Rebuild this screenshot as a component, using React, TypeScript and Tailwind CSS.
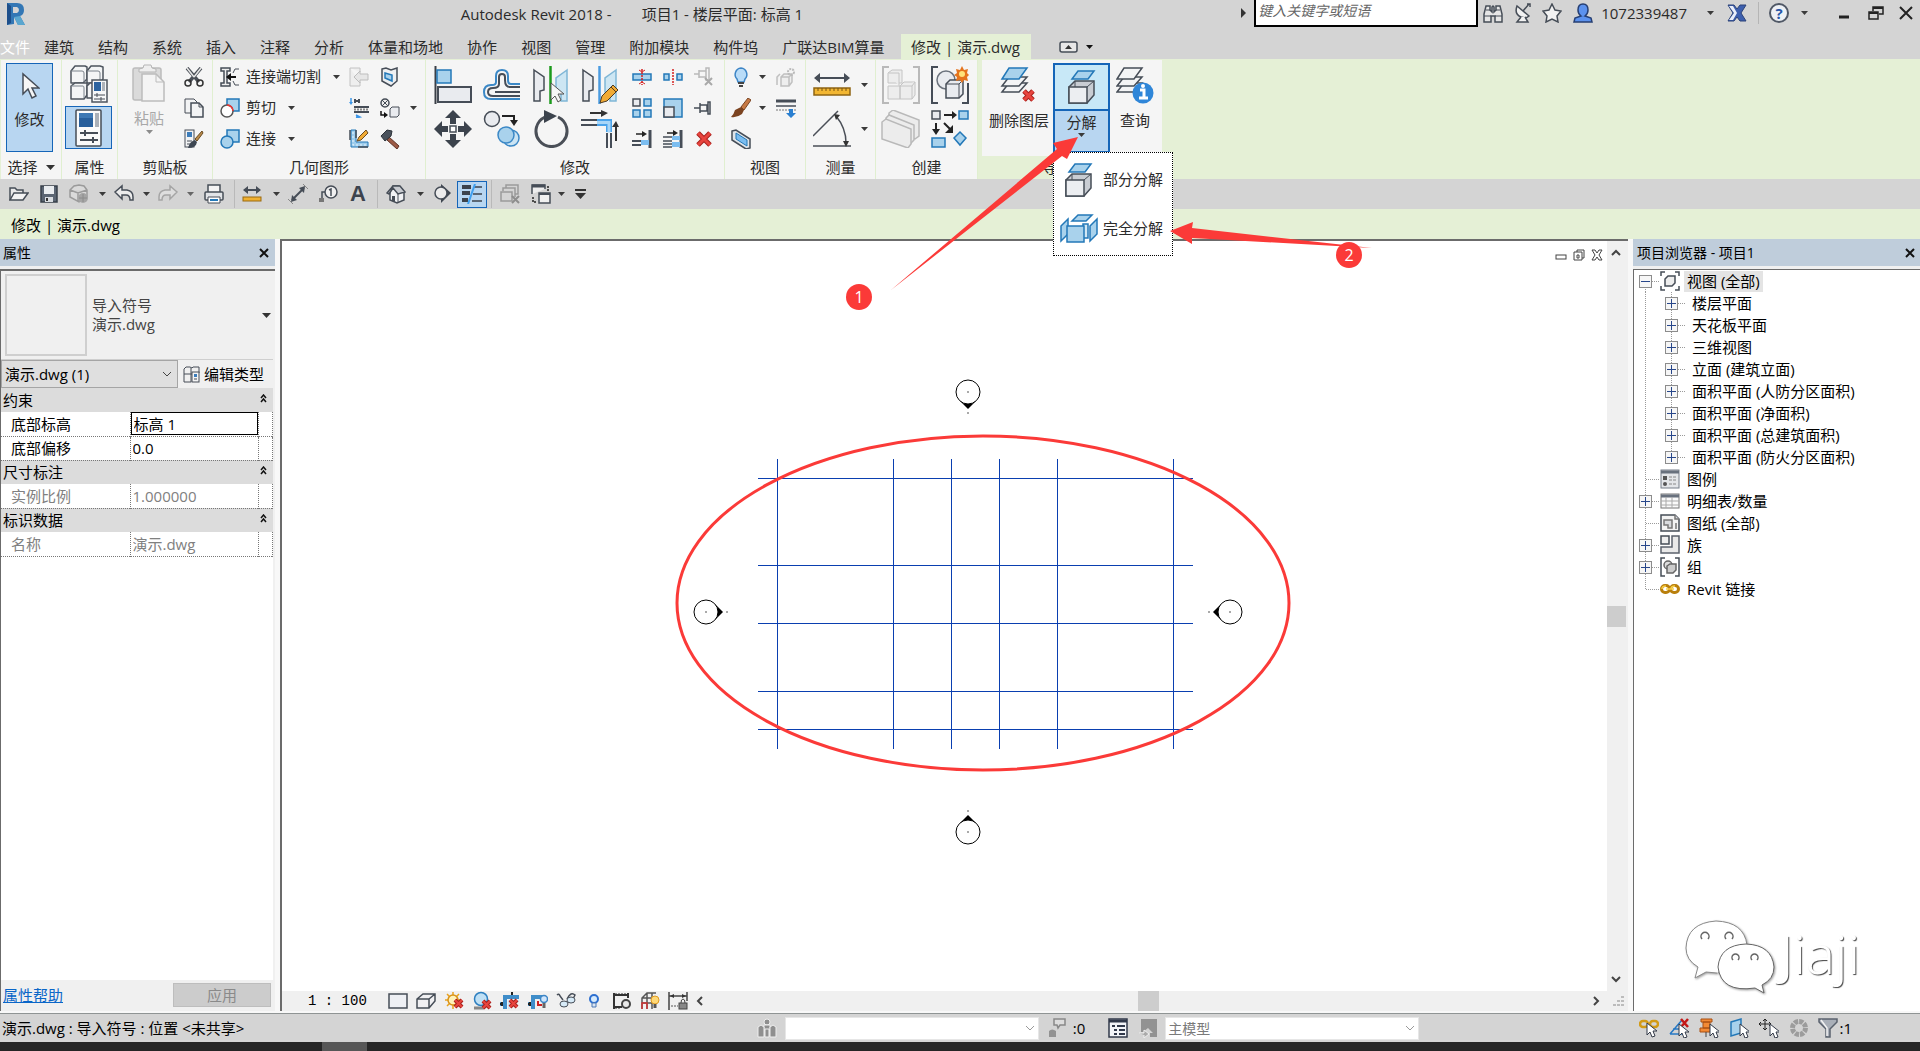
import React from "react";

type SvgProps = { w?: number; h?: number; vb?: string; children: React.ReactNode };

const Svg: React.FC<SvgProps> = ({ w = 20, h = w, vb, children }) => (
    <svg width={w} height={h} viewBox={vb ?? `0 0 ${w} ${h}`} fill="none" className="shrink-0" aria-hidden="true">
        {children}
    </svg>
);

const DARK = "#464d57";
const BLUE = "#2378b8";
const SKY = "#a9d2ec";
const PALE = "#e9ebef";
const GREY = "#b9b9b9";

const Caret = ({ color = "#3a3a3a" }: { color?: string }) => (
    <Svg w={7} h={4}><path d="M0 0h7L3.5 4z" fill={color} /></Svg>
);

const RedX = ({ x, y, s }: { x: number; y: number; s: number }) => (
    <>
        <path d={`M${x} ${y}l${s} ${s}M${x + s} ${y}l${-s} ${s}`} stroke="#a8211d" strokeWidth={s > 8 ? 5 : 4} />
        <path d={`M${x} ${y}l${s} ${s}M${x + s} ${y}l${-s} ${s}`} stroke="#e8443e" strokeWidth={s > 8 ? 3 : 2} />
    </>
);

const Cursor = ({ x, y }: { x: number; y: number }) => (
    <path d={`M${x} ${y}v12l3-3 2 5 3-1-2-5h4z`} fill="#fff" stroke="#333a48" />
);

/* ---------- ribbon icons, 38px ---------- */
const big: Record<string, React.ReactNode> = {
    arrow: <Svg w={20} h={28}><path d="M3 2v20l5-5 4 9 4-2-4-8h7z" fill="#f6f6f6" stroke={DARK} strokeWidth="1.5" /></Svg>,
    types: (
        <Svg w={38}>
            <g fill="#f4f5f6" stroke="#4d545e" strokeWidth="1.5" strokeLinejoin="round">
                <path d="M1 6l4-5h10l2 1v12l-4 4H1z" /><path d="M17 6l4-5h9l3 1v12l-3 4H17z" />
                <path d="M1 21l4-3h12v12l-3 4H1z" /><path d="M17 21l3-3h8v15h-11z" />
            </g>
            <path d="M1 6h11q2 0 2 2v9M17 6h11q2 0 2 2v9M1 21h12q1 0 1 2v10" stroke="#7b828b" />
            <rect x="22" y="15" width="15" height="22" fill="#f7f8f9" stroke="#4d545e" strokeWidth="1.5" />
            <rect x="24" y="17" width="7" height="9" fill="#2c63a0" /><rect x="32" y="17" width="3" height="9" fill="#aeb3ba" />
            <path d="M24 30h11M24 34h11M27 28v4M31 32v4" stroke={DARK} />
        </Svg>
    ),
    props: (
        <Svg w={28} h={38}>
            <rect x="1" y="1" width="25" height="36" rx="1" fill="#fafafa" stroke={DARK} strokeWidth="1.5" />
            <rect x="4" y="4" width="14" height="14" fill="#285f9c" /><rect x="4" y="4" width="14" height="5" fill="#3d78b4" /><rect x="20" y="4" width="4" height="14" fill="#aab0b8" />
            <path d="M5 24h18M5 31h18M10 21v6M18 28v6" stroke={DARK} strokeWidth="2" />
        </Svg>
    ),
    paste: (
        <Svg w={34} h={38}>
            <rect x="1" y="4" width="28" height="32" rx="2" fill="#dadada" stroke="#bcbcbc" strokeWidth="1.5" />
            <path d="M7 8V5l4-1 1-3h7l1 3 4 1v3z" fill="#eee" stroke="#b5b5b5" />
            <path d="M10 10h14l8 8v19H10z" fill="#f4f4f4" stroke="#bcbcbc" strokeWidth="1.5" /><path d="M24 10v8h8" stroke="#bcbcbc" />
        </Svg>
    ),
    align: (
        <Svg w={38}><path d="M1.500 0v38" stroke="#3a3f47" strokeWidth="2" /><rect x="3" y="4" width="14" height="13" fill={SKY} stroke={BLUE} strokeWidth="1.500" /><rect x="4" y="21" width="33" height="15" fill={PALE} stroke={DARK} strokeWidth="2" /></Svg>
    ),
    offset: (
        <Svg w={38}>
            <path d="M37 18h-9q-3 0-3-4V10q0-6-6-6t-6 6v6q0 3-4 3H8Q1 19 1 26t7 7h29" stroke="#3b88c6" strokeWidth="2" />
            <path d="M37 21h-10q-5 0-5-7v-3q0-3-3-3t-3 3v7q0 4-6 4-5 0-5 4t5 4h27M37 26H12" stroke={DARK} strokeWidth="2" />
        </Svg>
    ),
    mirrorPick: (
        <Svg w={38}>
            <path d="M2 4l10 7v13l-4 1v10H2z" fill={PALE} stroke={DARK} strokeWidth="1.500" /><path d="M35 4L24 12v14l5 2v7h6z" fill="#cde6f3" stroke="#7fb6d6" strokeWidth="1.500" />
            <path d="M18.500 0v38" stroke="#1c9a1c" strokeWidth="2.500" /><path d="M19 17v17l4-4 3 6 3-2-3-6h6z" fill="#f6f6f6" stroke="#555" />
        </Svg>
    ),
    mirrorDraw: (
        <Svg w={38}>
            <path d="M2 4l10 7v13l-4 1v10H2z" fill={PALE} stroke={DARK} strokeWidth="1.500" /><path d="M35 4L24 12v14l5 2v7h6z" fill="#cde6f3" stroke="#7fb6d6" strokeWidth="1.500" />
            <path d="M18.500 0v38" stroke="#4a9be0" strokeWidth="2.500" /><path d="M19 37l2-7 11-11 5 5-11 11z" fill="#f1ab35" stroke="#4e3b22" /><path d="M30 21l5 5" stroke="#4e3b22" />
        </Svg>
    ),
    move: (
        <Svg w={38}><path d="M19 0l8 8h-5v6h-6V8h-5zM19 38l-8-8h5v-6h6v6h5zM0 19l8-8v5h6v6H8v5zM38 19l-8 8v-5h-6v-6h6v-5z" fill="#3c434d" /><rect x="16" y="16" width="6" height="6" fill="#fff" stroke={DARK} strokeWidth="1.500" /></Svg>
    ),
    copyEl: (
        <Svg w={38}>
            <circle cx="9" cy="9" r="7.500" fill={PALE} stroke={DARK} strokeWidth="1.500" /><circle cx="28" cy="28" r="8" fill="#cbe4f3" stroke="#3b88c6" strokeWidth="1.500" /><circle cx="23" cy="25" r="8" fill={SKY} stroke="#3b88c6" strokeWidth="1.500" />
            <path d="M19 6h12v5" stroke="#222" strokeWidth="2" /><path d="M27 10h8l-4 6z" fill="#222" />
        </Svg>
    ),
    rotate: <Svg w={38}><path d="M26 7a15.500 15.500 0 1 1-13 0" stroke="#4a4f57" strokeWidth="3" /><path d="M12 0l13 6-13 7z" fill="#3c434d" /></Svg>,
    trim: (
        <Svg w={38}><path d="M0 10h16M0 15h16M26 23v15M30 23v15" stroke={DARK} strokeWidth="2" /><path d="M16 10h14v12M16 15h10v7" stroke="#4aa3ea" strokeWidth="2" /><path d="M16 12.500h12v10" stroke="#a8d6f8" strokeWidth="3" /><path d="M9 3h14M35 31V14" stroke="#333" strokeWidth="2" /><path d="M20 0l7 3-7 4zM31 17l4-6 3 6z" fill="#333" /></Svg>
    ),
    dimension: (
        <Svg w={38}><path d="M3 12h32" stroke={DARK} strokeWidth="2" /><path d="M1 12l6-5v10zM37 12l-6-5v10z" fill={DARK} /><rect x="1" y="22" width="36" height="7" fill="#f2b632" stroke="#8f6413" strokeWidth="1.500" /><path d="M5 22v3M9 22v3M13 22v3M17 22v3M21 22v3M25 22v3M29 22v3M33 22v3" stroke="#7b5410" /></Svg>
    ),
    angle: <Svg w={38}><path d="M0 26L25 1M0 36h38M23 6q10 12 10 27" stroke="#4a4f57" strokeWidth="1.500" /><path d="M21 4l6 1-4 5zM30 31h6l-3 6z" fill="#333" /></Svg>,
    group: (
        <Svg w={38}><path d="M7 1H1v36h6M31 1h6v36h-6" stroke={GREY} strokeWidth="2" /><g fill="#ededed" stroke="#c4c4c4"><path d="M6 7l4-3h10v13H6zM6 20h12v13H6zM18 20l4-4h11v13l-3 4H18z" /><path d="M6 7h11v13M30 20v13M18 20h12l3-4" /></g></Svg>
    ),
    createGroup: (
        <Svg w={38}><path d="M7 1H1v36h6M31 37h6V17" stroke={DARK} strokeWidth="2" /><circle cx="15" cy="14" r="9" fill={PALE} stroke="#6c737d" strokeWidth="1.500" /><path d="M15 18l4-4h13v14l-4 4H15z" fill={PALE} stroke={DARK} strokeWidth="1.500" /><path d="M15 18h13v14M28 18l4-4" stroke={DARK} /><path d="M31 0l2 4 4-1-1 4 2 2-2 2 1 4-4-1-2 3-2-3-4 1 1-4-3-2 3-2-1-4 4 1z" fill="#e5741d" /><circle cx="31" cy="8" r="3" fill="#ffe27a" /></Svg>
    ),
    assembly: (
        <Svg w={40} h={38}><g fill="#ececec" stroke={GREY} strokeWidth="1.500"><path d="M8 3l4-3 26 10v16l-4 3L8 19z" /><path d="M5 8l3-3 25 10v15l-3 3L5 22z" /><path d="M1 12l4-3 25 10v15l-3 4L1 29z" /></g></Svg>
    ),
    similar: (
        <Svg w={38}><rect x="1" y="1" width="8" height="8" fill={PALE} stroke={DARK} strokeWidth="1.500" /><g fill={SKY} stroke={BLUE} strokeWidth="1.500"><rect x="28" y="1" width="9" height="8" /><rect x="1" y="28" width="13" height="9" /><path d="M29 22l6 6-6 7-6-7z" /></g><path d="M13 5h9M5 13v8M13 13l7 7" stroke="#222" strokeWidth="2" /><path d="M21 1l5 4-5 4zM1 19h8l-4 6zM22 15v8h-8z" fill="#222" /></Svg>
    ),
    deleteLayer: (
        <Svg w={38}><g fill="#f3f4f5" stroke={DARK} strokeWidth="1.500"><path d="M2 26l7-9h18l-8 9z" /><path d="M2 20l7-9h18l-8 9z" /></g><path d="M2 13L9 2h18l-8 11z" fill={SKY} stroke={BLUE} strokeWidth="1.500" /><RedX x={24} y={25} s={9} /></Svg>
    ),
    query: (
        <Svg w={38}><g fill="#f3f4f5" stroke={DARK} strokeWidth="1.500"><path d="M1 26l7-9h18l-8 9z" /><path d="M1 20l7-9h18l-8 9z" /><path d="M1 13L8 2h18l-8 11z" /></g><circle cx="27" cy="27" r="10.500" fill="#2f86d8" /><path d="M24 24h4v8M23 32h9" stroke="#fff" strokeWidth="3" /><circle cx="27" cy="20" r="2" fill="#fff" /></Svg>
    ),
    explode: (
        <Svg w={28} h={34}><path d="M1 17l6-6h19v14l-7 8H1z" fill="#c9cdd3" stroke={DARK} strokeWidth="1.500" /><path d="M7 11v6M19 17l7-6" stroke={DARK} /><path d="M1 17h18v16H1z" fill="#eceef1" stroke={DARK} strokeWidth="1.500" /><path d="M4 9l6-8h16l-6 8z" fill={SKY} stroke={BLUE} strokeWidth="1.500" /></Svg>
    ),
    explodeFull: (
        <Svg w={38} h={30}><g fill={SKY} stroke={BLUE} strokeWidth="1.500"><path d="M1 12l7-7v15l-7 7zM30 12l7-7v15l-7 7z" /><path d="M12 7l6-6h14l-6 6z" /><path d="M23 10h5v14h-5z" fill="#d3e8f5" /><path d="M7 12h17v16H7z" /></g></Svg>
    ),
};

/* ---------- small icons, 20px ---------- */
const sm: Record<string, React.ReactNode> = {
    cut: <Svg><path d="M3 1l12 14M17 1L5 15" stroke="#4a4f57" strokeWidth="3.500" /><path d="M3 1l7 9M17 1l-7 9" stroke="#e6e6e6" strokeWidth="1.500" /><circle cx="4" cy="16" r="3" stroke="#333" strokeWidth="1.500" /><circle cx="16" cy="16" r="3" stroke="#333" strokeWidth="1.500" /></Svg>,
    copy: <Svg><path d="M1 1h9l3 3v11H1z" fill="#f2f3f4" stroke={DARK} /><path d="M7 5h8l4 4v10H7z" fill="#f2f3f4" stroke={DARK} strokeWidth="1.500" /><path d="M15 5v4h4" stroke={DARK} /></Svg>,
    match: <Svg><rect x="1" y="1" width="9" height="17" fill="#f2f3f4" stroke={DARK} /><rect x="3" y="3" width="5" height="5" fill="#3c7cba" /><path d="M3 12h5M3 15h5" stroke={DARK} /><path d="M11 10l7-8 1 2-6 8z" fill="#b98b4a" stroke="#6a4a20" /><path d="M4 19q2-7 7-8l2 2q-1 6-9 6z" fill="#3d4652" /></Svg>,
    cope: <Svg><path d="M1 1h9v3H7v12h3v3H1v-3h3V4H1z" fill="#eee" stroke={DARK} strokeWidth="1.500" /><path d="M19 2h-4l-2 4M19 18h-4l-2-4" stroke={DARK} /><path d="M8 10h8" stroke="#111" strokeWidth="2" /><path d="M11 6v8l-5-4z" fill="#111" /></Svg>,
    cutGeo: <Svg><rect x="7" y="1" width="12" height="12" fill={SKY} stroke={BLUE} strokeWidth="1.500" /><circle cx="7" cy="13" r="6" fill="#fff" stroke="#555" strokeWidth="1.500" /><path d="M7 7a6 6 0 0 1 6 6" stroke="#e33" strokeWidth="1.500" /></Svg>,
    join: <Svg><rect x="7" y="1" width="12" height="12" fill={SKY} stroke={BLUE} strokeWidth="1.500" /><circle cx="7" cy="13" r="6" fill={SKY} stroke={BLUE} strokeWidth="1.500" /></Svg>,
    joinOff: <Svg><path d="M1 1h10v4M1 1v18h10v-4" fill="#eee" stroke="#c2c2c2" /><path d="M19 7h-8V4l-6 6 6 6v-3h8z" fill="#e6e6e6" stroke="#bdbdbd" /></Svg>,
    wallOpen: <Svg><path d="M2 2l4-1 5 2 6-2v13l-6 5-9-5z" fill="#eef0f2" stroke={DARK} strokeWidth="1.500" /><path d="M5 6l7 2v6l-7-3z" fill={SKY} stroke={BLUE} strokeWidth="1.500" /></Svg>,
    beam: <Svg><path d="M2 0v5M7 19h3M7 17l4 2-4 1" stroke="#3c96e8" strokeWidth="1.500" /><path d="M0 4h4L2 7z" fill="#3c96e8" /><path d="M6 1v4M10 1v4M6 3h4M5 9h15M5 14h15" stroke={DARK} strokeWidth="2" /><path d="M5 11.500h15" stroke="#888" strokeDasharray="2 1" strokeWidth="2" /></Svg>,
    splitFace: <Svg><circle cx="5" cy="5" r="4" fill="#eee" stroke={DARK} strokeWidth="1.500" /><path d="M2 2l6 6M8 2L2 8" stroke={DARK} /><path d="M10 11l2-2h7v8l-2 2h-7z" fill={PALE} stroke={DARK} /><path d="M1 13v4h5" stroke="#111" strokeWidth="1.500" /><path d="M4 14l4 3-4 3z" fill="#111" /></Svg>,
    wallJoin: <Svg><path d="M2 1v17h17v-5H7V1z" fill="#9fcdec" stroke={BLUE} /><path d="M1 1v10M7 1v8M9 18h10" stroke={DARK} strokeWidth="1.500" /><path d="M4 3v13h15" stroke="#e8f4fc" strokeDasharray="2 2" /><path d="M8 12l2-4 7-7 2 3-7 7z" fill="#f1ab35" stroke="#6a4a20" /></Svg>,
    hammer: <Svg><path d="M9 8l10 9-2 3-10-9z" fill="#9d5a45" stroke="#5e3226" /><path d="M1 7l6-6 5 1-1 5-6 5z" fill="#4a525c" stroke="#2e343b" /></Svg>,
    splitEl: <Svg><rect x="1" y="7" width="18" height="6" fill={SKY} stroke={BLUE} strokeWidth="1.500" /><path d="M10 2v16" stroke="#d42020" strokeWidth="1.500" strokeDasharray="2 1" /><path d="M7 3l3 2 3-2M7 17l3-2 3 2" stroke="#d42020" /></Svg>,
    splitGap: <Svg><rect x="1" y="7" width="5" height="6" fill={SKY} stroke={BLUE} strokeWidth="1.500" /><rect x="14" y="7" width="5" height="6" fill={SKY} stroke={BLUE} strokeWidth="1.500" /><path d="M10 2v16" stroke="#d42020" strokeWidth="1.500" strokeDasharray="2 1" /></Svg>,
    unpin: <Svg><path d="M0 7h5M5 3v8M5 4h7M5 10h7M12 1v12h3V1z" stroke={GREY} strokeWidth="1.500" /><path d="M11 11l7 7M18 11l-7 7" stroke="#a9a9a9" strokeWidth="2" /></Svg>,
    array: <Svg><g strokeWidth="1.500"><rect x="1" y="1" width="7" height="7" fill={PALE} stroke={DARK} /><g fill={SKY} stroke={BLUE}><rect x="12" y="1" width="7" height="7" /><rect x="1" y="12" width="7" height="7" /><rect x="12" y="12" width="7" height="7" /></g></g></Svg>,
    scale: <Svg><rect x="1" y="1" width="18" height="18" fill={SKY} stroke={BLUE} strokeWidth="1.500" /><rect x="1" y="9" width="10" height="10" fill={PALE} stroke={DARK} strokeWidth="1.500" /></Svg>,
    pin: <Svg><path d="M0 10h6M6 5v10M6 7h7v6H6M14 4v12h2V4z" stroke={DARK} strokeWidth="1.500" /></Svg>,
    trimOne: <Svg><path d="M18 1v18" stroke={DARK} strokeWidth="3" /><path d="M0 12h9M0 16h9" stroke={DARK} strokeWidth="2" /><path d="M9 11h8v5H9z" fill="#7bbdf0" /><path d="M4 5h7" stroke="#222" strokeWidth="1.500" /><path d="M10 2l5 3-5 3z" fill="#222" /></Svg>,
    trimMany: <Svg><path d="M18 1v18" stroke={DARK} strokeWidth="3" /><path d="M0 8h9M0 12h9M0 15h9M0 18h9" stroke={DARK} strokeWidth="1.500" /><path d="M9 7h8v4H9zM9 13h8v5H9z" fill="#7bbdf0" /><path d="M4 4h7" stroke="#222" strokeWidth="1.500" /><path d="M10 1l5 3-5 3z" fill="#222" /></Svg>,
    del: <Svg><RedX x={4} y={4} s={12} /></Svg>,
    bulb: <Svg><path d="M10 1a6.500 6.500 0 0 1 4 11l-1 3H7l-1-3a6.500 6.500 0 0 1 4-11z" fill="#b9dcf8" stroke="#3d85c6" strokeWidth="1.500" /><path d="M7 16h6M8 19h4" stroke="#444" strokeWidth="2" /></Svg>,
    displace: <Svg><path d="M5 10l3-3h8v8l-3 4H5zM5 10h8v9M13 10l3-3M1 18V10l3-3" fill="#eee" stroke="#c0c0c0" strokeWidth="1.500" /><circle cx="15" cy="5" r="3" stroke="#bbb" strokeWidth="2" strokeDasharray="2 1" /></Svg>,
    brush: <Svg><path d="M10 9l7-9 3 2-7 10z" fill="#c77a45" stroke="#7a4524" /><path d="M0 19q3-3 4-7l6-3 3 3-2 4q-5 4-11 3z" fill="#7b4320" /></Svg>,
    lineweight: <Svg><path d="M0 3h20" stroke={DARK} strokeWidth="3" /><path d="M0 8h20" stroke={DARK} strokeWidth="1.500" /><path d="M0 12h20" stroke="#777" strokeDasharray="2 1" /><path d="M13 11h4v4h3l-5 5-5-5h3z" fill="#2a7fd0" /></Svg>,
    selBox: <Svg><path d="M1 2l4-1 14 9v9l-4 1-14-9z" fill="#dfe4e9" stroke={DARK} strokeWidth="1.500" /><path d="M5 4l11 7v6L5 10z" fill="#7bbdf0" stroke={BLUE} /></Svg>,
};

/* ---------- quick access icons ---------- */
const qat: Record<string, React.ReactNode> = {
    open: <Svg w={20} h={18}><path d="M1 15V3h5l2 2h6v3" fill="#e9e9e9" stroke={DARK} strokeWidth="1.500" /><path d="M1 15L5 8h14l-5 7z" fill="#f4f4f4" stroke={DARK} strokeWidth="1.500" /></Svg>,
    save: <Svg w={18}><path d="M1 1h16v16H1z" fill="#5b6573" stroke="#373f4a" strokeWidth="1.500" /><path d="M4 1h10v8H4z" fill="#e9ecef" /><path d="M5 12h8v5H5z" fill="#d9dde2" /><rect x="6" y="13" width="2" height="3" fill="#333" /></Svg>,
    sync: <Svg><path d="M1 6l4-4 5-1 5 1 3 4v7l-8 5-9-5zM1 6l8 3 9-3M9 9v9" fill="#dadada" stroke="#9b9b9b" strokeWidth="1.500" /><circle cx="14" cy="14" r="5" fill="#a5a5a5" /><path d="M10 14h8M14 10v8" stroke="#8c8c8c" /></Svg>,
    undo: <Svg><path d="M1 8l7-6v4h5q6 1 6 7v3h-3q0-5-4-5H8v4z" fill="#ececec" stroke={DARK} strokeWidth="1.500" /></Svg>,
    redo: <Svg><path d="M19 8l-7-6v4H7q-6 1-6 7v3h3q0-5 4-5h4v4z" fill="#dedede" stroke="#a5a5a5" strokeWidth="1.500" /></Svg>,
    print: <Svg><path d="M4 8V1h12v7" fill="#f4f4f4" stroke={DARK} strokeWidth="1.500" /><rect x="1" y="8" width="18" height="8" rx="1" fill="#e2e4e7" stroke={DARK} strokeWidth="1.500" /><path d="M4 13h12v6H4z" fill="#fff" stroke={DARK} /><path d="M6 16h8" stroke={BLUE} strokeWidth="2" /></Svg>,
    measure: <Svg><path d="M2 6h16" stroke={DARK} strokeWidth="2" /><path d="M1 6l5-4v8zM19 6l-5-4v8z" fill={DARK} /><rect x="1" y="13" width="18" height="4" fill="#f0b030" stroke="#9a6a10" /></Svg>,
    dim: <Svg><path d="M4 16L16 4" stroke={DARK} strokeWidth="2" /><path d="M4 11l5 5-6 2zM16 9l-5-5 6-2z" fill={DARK} /><path d="M0 15l5 5M15 0l5 5" stroke="#888" /></Svg>,
    tag: <Svg><circle cx="13" cy="8" r="6" fill="#f0f0f0" stroke={DARK} strokeWidth="1.500" /><path d="M11 6l2-1v7M7 8H4v7" stroke={DARK} strokeWidth="1.500" /><rect x="1" y="14" width="5" height="4" fill="#777" /></Svg>,
    house: <Svg><path d="M4 8v8l7 3 7-3V8l-5-6H7z" fill="#f1f2f4" stroke={DARK} strokeWidth="1.500" /><path d="M1 9l6-7h7l5 6-7 2-5-6-4 6z" fill="#c9ccd1" stroke={DARK} strokeWidth="1.500" /><path d="M12 10v9" stroke={DARK} /><path d="M6 12h3v6l-3-1z" fill={DARK} /></Svg>,
    section: <Svg><path d="M9 0l10 9-10 10z" fill="#3f4650" /><circle cx="9" cy="9" r="6" fill="#ececec" stroke={DARK} strokeWidth="1.500" /></Svg>,
    thin: <Svg w={22} h={20}><path d="M1 3h9M1 9h8M1 16h6" stroke="#3c434d" strokeWidth="4" /><path d="M13 3h8M12 10h9M11 17h10" stroke="#3c434d" strokeWidth="1.500" /><path d="M14 0L7 20" stroke="#3fa0f0" strokeWidth="2" /></Svg>,
    closeHidden: <Svg><path d="M6 4V1h12v9h-3M3 7V4h12v9M1 8h11v9H1z" stroke="#9a9a9a" strokeWidth="1.500" /><path d="M12 12l7 7M19 12l-7 7" stroke="#8e8e8e" strokeWidth="2" /></Svg>,
    switchWin: <Svg><path d="M1 10V1h13v4" fill="#eee" stroke={DARK} strokeWidth="1.500" /><path d="M1 2h13" stroke={DARK} strokeWidth="3" /><rect x="8" y="9" width="11" height="10" fill="#f0f0f0" stroke={DARK} strokeWidth="1.500" /><path d="M8 10h11" stroke={DARK} strokeWidth="2" /><path d="M17 2v5M2 13v5h4" stroke="#222" strokeDasharray="2 1" strokeWidth="1.500" /></Svg>,
    more: <Svg w={11} h={10}><path d="M0 1h11" stroke="#333" strokeWidth="2" /><path d="M0 4h11L5.500 10z" fill="#333" /></Svg>,
};

type BtnProps = { label: string; className?: string; children: React.ReactNode };
const IconButton: React.FC<BtnProps> = ({ label, className = "", children }) => (
    <button type="button" aria-label={label} className={`flex shrink-0 items-center justify-center ${className}`}>{children}</button>
);

const Panel: React.FC<{ title: string; width: string; caret?: boolean; children: React.ReactNode }> = ({ title, width, caret, children }) => (
    <section className={`flex shrink-0 flex-col border-r border-[#e0efd0] bg-[#f5f5f5] ${width}`}>
        <div className="flex h-24 overflow-hidden">{children}</div>
        <h2 className="flex h-[22px] items-center justify-center gap-2">
            {title}
            {caret && <Svg w={9} h={5}><path d="M0 0h9L4.500 5z" fill="#333" /></Svg>}
        </h2>
    </section>
);

const SmallColumn = ({ names, width = "w-[31px]" }: { names: string[]; width?: string }) => (
    <div className={`flex shrink-0 flex-col pt-px ${width}`}>
        {names.map((n) => <IconButton key={n} label={n} className="h-[31px]">{sm[n]}</IconButton>)}
    </div>
);

const BigColumn = ({ names, width = "w-[49px]" }: { names: string[]; width?: string }) => (
    <div className={`flex shrink-0 flex-col pt-[3px] ${width}`}>
        {names.map((n) => <IconButton key={n} label={n} className="h-11">{big[n]}</IconButton>)}
    </div>
);

const TitleBar = () => (
    <header className="flex h-[34px] shrink-0 items-start">
        <div className="w-[24%] pt-0.5 pl-1.5">
            <Svg w={20} h={24}>
                <path d="M1 1h10q7 0 7 7 0 5-4 6l5 9h-7L8 15v7l-7 1z" fill="#3377b5" />
                <path d="M7 5h4q2 1 2 3t-2 3H7z" fill="#d4d4d4" />
                <path d="M1 1l4 3v17l-4 2z" fill="#1d4f8b" /><path d="M8 15l4 8h7l-5-9z" fill="#5aa6cf" />
            </Svg>
        </div>
        <h1 className="flex pt-[3px] leading-[22px] whitespace-pre">Autodesk Revit 2018 -<span className="ml-[30px]">项目1 - 楼层平面: 标高 1</span></h1>
        <div className="ml-auto flex h-[26px] items-center">
            <Svg w={5} h={10}><path d="M0 0l5 5-5 5z" fill="#333" /></Svg>
            <input aria-label="搜索" placeholder="键入关键字或短语" className="ml-2 h-[27px] w-56 border-2 border-t-0 border-black bg-white px-0.5 pb-1 font-['Noto_Sans_CJK_SC',sans-serif] text-[14px] italic outline-none placeholder:text-[#666]" />
            <IconButton label="搜索" className="w-[30px]"><Svg><path d="M3 3h4v4l2 2V4l1-1 1 1v5l2-2V3h4l2 8v8h-7v-6H8v6H1v-8z" fill="#e6e6e6" stroke={DARK} strokeWidth="1.500" /><path d="M1 13h7M12 13h7M3 7h4M13 7h4" stroke={DARK} /></Svg></IconButton>
            <IconButton label="通讯中心" className="w-[29px]"><Svg><path d="M4 3q-3 8 4 11 5 2 8-1z" fill="#f2f2f2" stroke={DARK} strokeWidth="1.500" /><path d="M10 8l6-7M14 1h3v3M8 14l-4 5h11l-3-5" fill="#f2f2f2" stroke={DARK} strokeWidth="1.500" /></Svg></IconButton>
            <IconButton label="收藏夹" className="w-[30px]"><Svg><path d="M10 1l3 6 6 1-4 5 1 6-6-3-6 3 1-6-4-5 6-1z" fill="#f2f2f2" stroke={DARK} strokeWidth="1.500" /></Svg></IconButton>
            <button type="button" className="flex items-center gap-2 pl-1.5 leading-[22px]">
                <Svg><path d="M10 1q5 0 5 6 0 4-3 6l6 2 1 4H1l1-4 6-2q-3-2-3-6 0-6 5-6z" fill="#5c92ee" stroke="#263f73" strokeWidth="1.500" /></Svg>
                1072339487
                <span className="ml-3"><Caret /></span>
            </button>
            <IconButton label="应用商店" className="ml-2 w-[30px]"><Svg w={20} h={18}><path d="M1 1h6l3 4 3-4h6l-5 8 5 8h-6l-3-4-3 4H1l5-8z" fill="#3d5fae" stroke="#2c4379" /><path d="M2 2h4l4 7-4 7H2l5-7z" fill="#e9eefa" /></Svg></IconButton>
            <span className="mx-1.5 h-[22px] w-px bg-[#b5b5b5]" />
            <button type="button" aria-label="帮助" className="ml-1 flex items-center gap-3">
                <span className="flex size-5 items-center justify-center rounded-full border-2 border-[#505866] bg-[#eef1f6] text-[15px] leading-none font-bold text-[#2856a8]">?</span>
                <Caret />
            </button>
            <IconButton label="最小化" className="ml-5 w-[32px]"><Svg w={12} h={14}><path d="M1 11h10" stroke="#222" strokeWidth="3" /></Svg></IconButton>
            <IconButton label="还原" className="w-[32px]"><Svg w={16} h={14}><path d="M5 5V1h10v7h-4M1 6h9v7H1z" stroke="#222" strokeWidth="1.500" /><path d="M5 2h10M1 7h9" stroke="#222" strokeWidth="2" /></Svg></IconButton>
            <IconButton label="关闭" className="w-7"><Svg w={14}><path d="M1 1l12 12M13 1L1 13" stroke="#222" strokeWidth="2" /></Svg></IconButton>
        </div>
    </header>
);

const TABS = ["建筑", "结构", "系统", "插入", "注释", "分析", "体量和场地", "协作", "视图", "管理", "附加模块", "构件坞", "广联达BIM算量"];

const TabBar = () => (
    <nav className="flex h-[25px] shrink-0 leading-[22px]">
        <button type="button" className="mr-0.5 w-[30px] whitespace-nowrap text-white">文件</button>
        {TABS.map((t) => <button type="button" key={t} className="px-3 whitespace-nowrap">{t}</button>)}
        <button type="button" className="ml-1 w-[130px] bg-[#e5f0d6] whitespace-nowrap">修改 | 演示.dwg</button>
        <button type="button" aria-label="折叠功能区" className="ml-7 flex items-center gap-2">
            <Svg w={19} h={12}><rect x="1" y="1" width="17" height="10" rx="2" fill="#e8e8e8" stroke={DARK} strokeWidth="1.500" /><path d="M6 8l3.500-4L13 8z" fill="#333" /></Svg>
            <Caret color="#111" />
        </button>
    </nav>
);

const GeoRow = ({ icon, text }: { icon: string; text: string }) => (
    <button type="button" className="flex h-[31px] items-center gap-1.5 whitespace-nowrap">
        {sm[icon]}{text}<span className="ml-1.5"><Caret /></span>
    </button>
);

const ExplodeMenu = () => (
    <div role="menu" className="absolute top-[92px] left-0 z-20 w-[120px] border border-dotted border-black bg-white pt-0.5 pb-0.5">
        <button type="button" role="menuitem" className="flex h-[49px] w-full items-center whitespace-nowrap">
            <span className="flex w-[49px] justify-center">{big.explode}</span>部分分解
        </button>
        <button type="button" role="menuitem" className="flex h-[49px] w-full items-center whitespace-nowrap">
            <span className="flex w-[49px] justify-center">{big.explodeFull}</span>完全分解
        </button>
    </div>
);

const Ribbon = () => (
    <div className="flex h-[120px] shrink-0 bg-[#e5f0d6] pt-px pl-px">
        <Panel title="选择" width="w-[61px]" caret>
            <button type="button" className="mt-[3px] ml-[5px] flex h-[89px] w-[47px] flex-col items-center border border-[#1565b8] bg-[#b8d6f1] pt-2">
                {big.arrow}
                <span className="mt-2 leading-[22px]">修改</span>
            </button>
        </Panel>
        <Panel title="属性" width="w-[56px]">
            <div className="flex w-[53px] flex-col items-center pt-1">
                <IconButton label="类型属性" className="h-10 w-[47px]">{big.types}</IconButton>
                <IconButton label="属性" className="mt-0.5 h-[43px] w-[47px] border border-[#1565b8] bg-[#b8d6f1]">{big.props}</IconButton>
            </div>
        </Panel>
        <Panel title="剪贴板" width="w-[95px]">
            <button type="button" className="flex w-[60px] flex-col items-center pt-1 pl-0.5 text-[#a8a8a8]">
                {big.paste}
                <span className="mt-1 leading-6">粘贴</span>
                <Caret color="#8c8c8c" />
            </button>
            <SmallColumn names={["cut", "copy", "match"]} />
        </Panel>
        <Panel title="几何图形" width="w-[213px]">
            <div className="flex w-[130px] flex-col pt-px pl-[7px]">
                <GeoRow icon="cope" text="连接端切割" />
                <GeoRow icon="cutGeo" text="剪切" />
                <GeoRow icon="join" text="连接" />
            </div>
            <SmallColumn names={["joinOff", "beam", "wallJoin"]} />
            <SmallColumn names={["wallOpen", "splitFace", "hammer"]} />
            <IconButton label="填色选项" className="h-24 w-4"><Caret /></IconButton>
        </Panel>
        <Panel title="修改" width="w-[299px]">
            <div className="flex pl-0.5">
                <BigColumn names={["align", "move"]} />
                <BigColumn names={["offset", "copyEl"]} />
                <BigColumn names={["mirrorPick", "rotate"]} />
                <BigColumn names={["mirrorDraw", "trim"]} />
            </div>
            <div className="ml-0.5 flex">
                <SmallColumn names={["splitEl", "array", "trimOne"]} />
                <SmallColumn names={["splitGap", "scale", "trimMany"]} />
                <SmallColumn names={["unpin", "pin", "del"]} />
            </div>
        </Panel>
        <Panel title="视图" width="w-[81px]">
            <SmallColumn names={["bulb", "brush", "selBox"]} />
            <div className="flex w-3 flex-col items-center pt-px">
                <span className="flex h-[31px] items-center"><Caret /></span>
                <span className="flex h-[31px] items-center"><Caret /></span>
            </div>
            <SmallColumn names={["displace", "lineweight"]} width="w-9" />
        </Panel>
        <Panel title="测量" width="w-[70px]">
            <div className="flex pl-px">
                <BigColumn names={["dimension", "angle"]} />
                <div className="flex w-4 flex-col items-center pt-[3px]">
                    <span className="flex h-11 items-center"><Caret /></span>
                    <span className="flex h-11 items-center"><Caret /></span>
                </div>
            </div>
        </Panel>
        <Panel title="创建" width="w-[102px]">
            <BigColumn names={["group", "assembly"]} />
            <BigColumn names={["createGroup", "similar"]} />
        </Panel>
        <section className="ml-1 flex w-[180px] shrink-0 flex-col">
            <div className="flex h-24 bg-[#f5f5f5]">
                <button type="button" className="flex w-[71px] flex-col items-center pt-1.5 pl-[3px] whitespace-nowrap">
                    {big.deleteLayer}
                    <span className="mt-1 leading-6">删除图层</span>
                </button>
                <div className="relative">
                    <button type="button" aria-haspopup="menu" className="mt-[3px] flex h-[90px] w-[57px] flex-col items-center border-2 border-[#1565b8] bg-[#b8d6f1]">
                        <span className="flex h-[46px] w-full shrink-0 items-center justify-center border-b-2 border-[#1565b8] bg-[#c8e8f7]">{big.explode}</span>
                        <span className="leading-[22px]">分解</span>
                        <Caret />
                    </button>
                    <ExplodeMenu />
                </div>
                <button type="button" className="flex w-[50px] flex-col items-center pt-1.5">
                    {big.query}
                    <span className="mt-1 leading-6">查询</span>
                </button>
            </div>
            <h2 className="flex h-[22px] items-center justify-center">导入实例</h2>
        </section>
    </div>
);

const Sep = () => <span className="h-7 w-px shrink-0 bg-[#b9b9b9]" />;

const QuickAccess = () => (
    <div className="flex h-[30px] shrink-0 items-center pl-1">
        <IconButton label="打开" className="w-[30px]">{qat.open}</IconButton>
        <IconButton label="保存" className="w-[30px]">{qat.save}</IconButton>
        <IconButton label="同步" className="w-[30px]">{qat.sync}</IconButton>
        <IconButton label="同步选项" className="w-4"><Caret /></IconButton>
        <IconButton label="放弃" className="w-7">{qat.undo}</IconButton>
        <IconButton label="放弃列表" className="w-4"><Caret /></IconButton>
        <IconButton label="重做" className="w-7">{qat.redo}</IconButton>
        <IconButton label="重做列表" className="w-4"><Caret color="#666" /></IconButton>
        <IconButton label="打印" className="w-8">{qat.print}</IconButton>
        <span className="w-1" />
        <Sep />
        <IconButton label="测量" className="w-[34px]">{qat.measure}</IconButton>
        <IconButton label="测量选项" className="w-3.5"><Caret /></IconButton>
        <IconButton label="对齐尺寸标注" className="w-[30px]">{qat.dim}</IconButton>
        <IconButton label="按类别标记" className="w-[30px]">{qat.tag}</IconButton>
        <button type="button" aria-label="文字" className="w-[30px] font-['Liberation_Sans'] text-[22px] leading-7 font-bold text-[#3c434d]">A</button>
        <span className="w-1" />
        <Sep />
        <IconButton label="三维视图" className="w-[36px]">{qat.house}</IconButton>
        <IconButton label="三维视图选项" className="w-3"><Caret /></IconButton>
        <IconButton label="剖面" className="w-[31px]">{qat.section}</IconButton>
        <IconButton label="细线" className="h-[27px] w-[30px] border border-[#1565b8] bg-[#b8d6f1]">{qat.thin}</IconButton>
        <span className="w-1" />
        <Sep />
        <IconButton label="关闭隐藏窗口" className="w-[36px]">{qat.closeHidden}</IconButton>
        <IconButton label="切换窗口" className="w-[26px]">{qat.switchWin}</IconButton>
        <IconButton label="切换窗口选项" className="w-3.5"><Caret /></IconButton>
        <IconButton label="自定义" className="w-6">{qat.more}</IconButton>
    </div>
);

const CloseMark = () => <Svg w={10}><path d="M1 1l8 8M9 1L1 9" stroke="#111" strokeWidth="2" /></Svg>;

const GROUPS = [
    { name: "约束", rows: [["底部标高", "标高 1"], ["底部偏移", "0.0"]], muted: false },
    { name: "尺寸标注", rows: [["实例比例", "1.000000"]], muted: true },
    { name: "标识数据", rows: [["名称", "演示.dwg"]], muted: true },
];

const PropertiesPanel = () => (
    <aside className="flex w-[275px] shrink-0 flex-col bg-[#f0f0f0] text-black">
        <div className="flex h-[27px] items-center justify-between bg-[#bfcddb] pr-1.5 pl-[3px] text-[14px]">
            <h2>属性</h2>
            <IconButton label="关闭属性"><CloseMark /></IconButton>
        </div>
        <div className="mt-[3px] flex min-h-0 flex-1 flex-col border-t-2 border-l border-[#6b6b6b] pr-0.5">
            <div className="flex h-[89px] items-center border-b border-[#cfcfcf] text-[#444]">
                <div className="ml-1 size-[82px] border-2 border-[#cfcfcf]" />
                <p className="ml-[5px] flex-1 leading-[19px]">导入符号<br />演示.dwg</p>
                <button type="button" aria-label="类型选择器" className="pr-0.5"><Svg w={9} h={5}><path d="M0 0h9L4.500 5z" fill="#333" /></Svg></button>
            </div>
            <div className="flex h-7 items-center">
                <div className="relative flex h-7 w-[177px] items-center">
                    <select aria-label="实例" className="h-7 w-full appearance-none border border-[#a5a5a5] bg-[#dfdfdf] pl-[3px]">
                        <option>演示.dwg (1)</option>
                    </select>
                    <span className="pointer-events-none absolute right-1.5"><Svg w={10} h={6}><path d="M1 1l4 4 4-4" stroke="#444" /></Svg></span>
                </div>
                <button type="button" className="ml-[5px] flex items-center gap-1 whitespace-nowrap">
                    <Svg w={17}><path d="M1 3l2-2h4l2 1 1-1h6v6M1 3v5h14M1 8v8h7M8 2v14" stroke={DARK} /><rect x="9" y="6" width="7" height="10" fill="#f4f4f4" stroke={DARK} /><rect x="11" y="8" width="3" height="3" fill="#3c7cba" /><path d="M11 13h3" stroke={DARK} /></Svg>
                    编辑类型
                </button>
            </div>
            <div className="min-h-0 flex-1 bg-white">
                <table className="w-full table-fixed border-collapse bg-white leading-[22px]">
                    <colgroup><col className="w-[129px]" /><col /><col className="w-3.5" /></colgroup>
                    {GROUPS.map((g) => (
                        <tbody key={g.name}>
                            <tr className="h-6 bg-[#dcdcdc]">
                                <th colSpan={2} className="p-0 pl-0.5 text-left font-normal">{g.name}</th>
                                <td className="p-0 pb-1">
                                    <button type="button" aria-label={`折叠${g.name}`} className="block"><Svg w={9} h={9}><path d="M2 4l2.500-3L7 4M2 8l2.500-3L7 8" stroke="#111" strokeWidth="1.500" /></Svg></button>
                                </td>
                            </tr>
                            {g.rows.map(([name, value], i) => (
                                <tr key={name} className={`h-6 border-b border-dotted border-[#777] ${g.muted ? "text-[#808080]" : ""}`}>
                                    <th scope="row" className="border-r border-dotted border-[#777] p-0 pl-2.5 text-left font-normal">{name}</th>
                                    <td className="border-r border-dotted border-[#777] p-0">
                                        <input aria-label={name} defaultValue={value} readOnly={g.muted} className={`block h-[23px] w-full px-0.5 outline-none ${!g.muted && i === 0 ? "border border-black" : ""}`} />
                                    </td>
                                    <td className="border-r border-dotted border-[#777] p-0" />
                                </tr>
                            ))}
                        </tbody>
                    ))}
                </table>
            </div>
            <div className="flex h-[31px] items-center justify-between pr-0.5 pb-px pl-0.5">
                <a href="#help" className="text-[#0a66c8] underline">属性帮助</a>
                <button type="button" disabled className="h-6 w-[98px] border border-[#bdbdbd] bg-[#cccccc] text-[#8a8a8a]">应用</button>
            </div>
        </div>
    </aside>
);

const GRID_X = [777, 893, 951, 999, 1057, 1173];
const GRID_Y = [478, 565, 623, 691, 729];
const MARKS = [
    { x: 968, y: 392, turn: 0 },
    { x: 1230, y: 612, turn: 90 },
    { x: 968, y: 832, turn: 180 },
    { x: 706, y: 612, turn: 270 },
];

const viewIcons: [string, React.ReactNode][] = [
    ["详细程度", <Svg w={20} h={16}><rect x="1" y="1" width="18" height="14" fill="#eef0f4" stroke={DARK} strokeWidth="1.500" /></Svg>],
    ["视觉样式", <Svg w={20} h={16}><path d="M1 6l6-5h12v7l-6 7H1zM1 6h12v9M13 6l6-5" fill="#f0f0f2" stroke={DARK} strokeWidth="1.500" /></Svg>],
    ["日光路径", <Svg><path d="M9 1v17M1 9h16M3 3l12 12M15 3L3 15" stroke="#e9a21c" strokeWidth="1.500" /><circle cx="9" cy="9" r="5" fill="#fff2b8" stroke="#d99217" strokeWidth="1.500" /><RedX x={11} y={9} s={7} /></Svg>],
    ["阴影", <Svg><path d="M2 17h10" stroke="#888" strokeWidth="3" /><circle cx="9" cy="8" r="6.500" fill="#bfe0f5" stroke="#2d7fc0" strokeWidth="1.500" /><RedX x={11} y={10} s={7} /></Svg>],
    ["裁剪视图", <Svg><path d="M5 18V6h14M0 13h5" stroke="#3f8dc9" strokeWidth="4" /><path d="M9 18V10h10" stroke="#cfe3f2" strokeWidth="2" /><path d="M12 1v3M0 13h3M2 11v4" stroke="#222" strokeWidth="2" /><RedX x={10} y={9} s={7} /></Svg>],
    ["裁剪区域", <Svg><path d="M5 18V6h11M0 13h5" stroke="#3f8dc9" strokeWidth="4" /><path d="M10 10v4h4" stroke="#c22" strokeWidth="2" /><path d="M0 13h3M2 11v4" stroke="#222" strokeWidth="2" /><circle cx="16" cy="8" r="3.500" fill="#cfe5fb" stroke="#3d85c6" strokeWidth="1.500" /><path d="M16 12v5" stroke="#666" strokeWidth="3" /></Svg>],
    ["临时隐藏", <Svg><path d="M1 4q2-2 3 1l3 4M11 8q4-8 8-4l-2 4" stroke={DARK} strokeWidth="1.500" /><ellipse cx="8" cy="13" rx="4" ry="3" fill="#d7ebf8" stroke={DARK} /><ellipse cx="15" cy="9" rx="4" ry="3" fill="#d7ebf8" stroke={DARK} /></Svg>],
    ["显示隐藏", <Svg w={12} h={16}><circle cx="6" cy="6" r="4" fill="#d7ebfc" stroke="#2d6fd0" strokeWidth="2" /><path d="M4 10h4v4H4z" fill="#dbe6f3" stroke="#4c78b5" /></Svg>],
    ["视图样板", <Svg><path d="M2 2v16M2 4h15M2 16h8M16 2v5" stroke="#333" strokeWidth="2" /><path d="M4 2v3M7 2v3M10 2v3M13 2v3M4 15v3M7 15v3" stroke="#333" /><circle cx="14" cy="13" r="4" fill="#e8e8e8" stroke="#444" strokeWidth="2" /></Svg>],
    ["分析模型", <Svg><path d="M2 18V7l5-5h9M2 7h12M7 2v16M12 2v16M2 12h12" stroke="#555" strokeWidth="1.500" /><path d="M2 18v-6h5v6M7 12v6" stroke="#d03434" strokeWidth="1.500" /><circle cx="15" cy="9" r="4" fill="#ffd978" stroke="#df9b20" /><path d="M15 13v4" stroke="#555" strokeWidth="3" /></Svg>],
    ["约束", <Svg><path d="M1 1v18M19 1v9M1 5h18" stroke="#444" strokeWidth="1.500" /><path d="M2 5l4-2v4zM18 5l-4-2v4z" fill="#333" /><path d="M3 15h7" stroke="#555" strokeDasharray="2 1" /><rect x="11" y="12" width="8" height="6" fill="#888" stroke="#444" /><path d="M13 12q0-4 2-4t2 4" stroke="#444" /></Svg>],
];

const ViewCanvas = () => (
    <main className="flex min-w-0 flex-1 flex-col border-t-2 border-l-2 border-[#6b6b6b] bg-[#f0f0f0]">
        <div className="flex min-h-0 flex-1">
            <div className="flex min-w-0 flex-1 justify-end bg-white">
                <div className="flex h-7 items-center gap-[6px] pr-1">
                    <button type="button" aria-label="最小化视图"><Svg w={12} h={12}><rect x="1" y="6" width="10" height="4" stroke="#444" /></Svg></button>
                    <button type="button" aria-label="还原视图"><Svg w={12} h={12}><path d="M4 3V1h7v8H9M1 3h8v8H1zM4 6h2v3H4z" stroke="#444" /></Svg></button>
                    <button type="button" aria-label="关闭视图"><Svg w={12} h={12}><path d="M1 1h3l2 3 2-3h3L8 6l3 5H8L6 8l-2 3H1l3-5z" stroke="#444" /></Svg></button>
                </div>
            </div>
            <div className="flex w-[21px] flex-col items-start justify-between bg-[#f0f0f0] py-2">
                <span className="ml-1"><Svg w={10} h={7}><path d="M1 6l4-4 4 4" stroke="#444" strokeWidth="2" /></Svg></span>
                <span className="h-[21px] w-[19px] bg-[#cdcdcd]" />
                <span className="ml-1"><Svg w={10} h={7}><path d="M1 1l4 4 4-4" stroke="#444" strokeWidth="2" /></Svg></span>
            </div>
        </div>
        <div className="flex h-5 shrink-0 items-center text-black">
            <button type="button" className="w-[102px] pl-[26px] text-left font-['Liberation_Mono'] text-[14px]">1 : 100</button>
            {viewIcons.map(([label, icon]) => <IconButton key={label} label={label} className="w-7">{icon}</IconButton>)}
            <span className="ml-1"><Svg w={7} h={10}><path d="M6 1L2 5l4 4" stroke="#444" strokeWidth="2" /></Svg></span>
            <div className="flex h-full flex-1 justify-center"><span className="h-full w-[21px] bg-[#cdcdcd]" /></div>
            <Svg w={7} h={10}><path d="M1 1l4 4-4 4" stroke="#444" strokeWidth="2" /></Svg>
            <span className="ml-3 pr-1"><Svg w={12}><path d="M9 1h3v2H9zM5 5h3v2H5zM9 5h3v2H9zM1 9h3v2H1zM5 9h3v2H5zM9 9h3v2H9z" fill="#bcbcbc" /></Svg></span>
        </div>
    </main>
);

/* grid lines, elevation marks and the red callouts drawn over the window */
const Annotations = () => (
    <svg className="pointer-events-none absolute inset-0 z-30 h-full w-full" aria-hidden="true">
        <g stroke="#0a3fb0" shapeRendering="crispEdges">
            {GRID_X.map((x) => <line key={x} x1={x + 0.5} x2={x + 0.5} y1={459} y2={749} />)}
            {GRID_Y.map((y) => <line key={y} x1={758} x2={1193} y1={y + 0.5} y2={y + 0.5} />)}
        </g>
        {MARKS.map((m) => (
            <g key={m.turn} transform={`translate(${m.x} ${m.y}) rotate(${m.turn})`}>
                <path d="M-8 9L0 17L8 9z" fill="#000" />
                <circle r="12" fill="#fff" stroke="#000" />
                <path d="M-1 0h2M-1 21h2" stroke="#555" />
            </g>
        ))}
        <ellipse cx="983" cy="603" rx="306" ry="167" fill="none" stroke="#fb3a38" strokeWidth="3" />
        <g fill="#fb3a38">
            <path d="M891 290L1057 149 1053 143 1078 137 1067 159 1062 156z" />
            <path d="M1170 231L1193 222 1192 228 1372 248 1192 238 1192 244z" />
            <circle cx="859" cy="297" r="13" />
            <circle cx="1349" cy="255" r="13" />
        </g>
        <g fill="#fff" fontSize="16" textAnchor="middle">
            <text x="859" y="303">1</text>
            <text x="1349" y="261">2</text>
        </g>
    </svg>
);

const treeIcons: Record<string, React.ReactNode> = {
    views: <Svg><path d="M5 1H1v4M15 1h4v4M1 15v4h4M19 15v4h-4" stroke={DARK} strokeWidth="1.500" /><path d="M5 8l3-3h7v7l-3 3H5z" fill="#eee" stroke={DARK} strokeWidth="1.500" /></Svg>,
    legend: <Svg><rect x="1" y="1" width="18" height="18" fill="#e4e6e9" stroke="#777f89" /><path d="M1 3h18" stroke="#68717d" strokeWidth="3" /><rect x="3" y="7" width="4" height="4" fill="#555" /><circle cx="5" cy="15" r="2" fill="#555" /><path d="M9 8h8M9 11h8M9 15h8" stroke="#888" strokeDasharray="3 1" /></Svg>,
    schedule: <Svg w={20} h={16}><rect x="1" y="1" width="18" height="14" fill="#fafafa" stroke="#777" /><path d="M1 3h18" stroke="#68717d" strokeWidth="3" /><path d="M1 8h18M1 12h18M6 4v11M12 4v11" stroke="#aaa" /></Svg>,
    sheet: <Svg w={20} h={18}><path d="M1 1h14l4 4v12H1z" fill="#f3f3f3" stroke={DARK} strokeWidth="1.500" /><path d="M4 6h8v8H8v-3H4zM15 1v4h4M16 9v6" fill="#d9dbde" stroke="#777" strokeWidth="1.500" /></Svg>,
    family: <Svg><path d="M1 1h8v8H1z" fill="#eee" stroke={DARK} strokeWidth="1.500" /><path d="M12 1h7v17H1v-6h11z" fill="#e9e9e9" stroke="#5b626c" strokeWidth="1.500" /></Svg>,
    group: <Svg><path d="M5 1H1v18h4M15 1h4v18h-4" stroke={DARK} strokeWidth="1.500" /><circle cx="8" cy="8" r="4" fill="#ddd" stroke="#666" strokeWidth="1.500" /><path d="M7 9l3-2h6v6l-3 3H7z" fill="#ccc" stroke="#666" strokeWidth="1.500" /></Svg>,
    link: <Svg w={20} h={12}><rect x="1.500" y="2.500" width="8" height="7" rx="3.500" stroke="#b97f0c" strokeWidth="3" /><rect x="10.500" y="2.500" width="8" height="7" rx="3.500" stroke="#b97f0c" strokeWidth="3" /><path d="M2 6q0-3 4-3M11 6q0-3 4-3M6 6h8" stroke="#f8cf45" strokeWidth="1.500" /></Svg>,
};

type Node = { text: string; icon?: string; open?: boolean; box: boolean; last?: boolean };
const NODES: Node[] = [
    { text: "视图 (全部)", icon: "views", open: true, box: true },
    { text: "楼层平面", box: true },
    { text: "天花板平面", box: true },
    { text: "三维视图", box: true },
    { text: "立面 (建筑立面)", box: true },
    { text: "面积平面 (人防分区面积)", box: true },
    { text: "面积平面 (净面积)", box: true },
    { text: "面积平面 (总建筑面积)", box: true },
    { text: "面积平面 (防火分区面积)", box: true, last: true },
    { text: "图例", icon: "legend", box: false },
    { text: "明细表/数量", icon: "schedule", box: true },
    { text: "图纸 (全部)", icon: "sheet", box: false },
    { text: "族", icon: "family", box: true },
    { text: "组", icon: "group", box: true },
    { text: "Revit 链接", icon: "link", box: false, last: true },
];

const TreeBranch = ({ box, open, last, first }: { box: boolean; open?: boolean; last?: boolean; first?: boolean }) => (
    <Svg w={26} h={22}>
        <path d={`M11.500 ${first ? 11 : 0}V${last ? 11 : 22}M12 11.500h14`} stroke="#9a9a9a" strokeDasharray="1 1" />
        {box && <><rect x="5.500" y="5.500" width="12" height="12" fill="#f6f6f6" stroke="#8c8c8c" /><path d={open ? "M7 11.500h9" : "M7 11.500h9M11.500 7v9"} stroke="#27468a" /></>}
    </Svg>
);

const TreeTrunk = () => <Svg w={26} h={22}><path d="M11.500 0v22" stroke="#9a9a9a" strokeDasharray="1 1" /></Svg>;

const ProjectBrowser = () => (
    <aside className="flex w-[287px] shrink-0 flex-col bg-[#f0f0f0] text-black">
        <div className="flex h-[27px] items-center justify-between bg-[#bfcddb] pr-[5px] pl-1 text-[14px]">
            <h2>项目浏览器 - 项目1</h2>
            <IconButton label="关闭项目浏览器"><CloseMark /></IconButton>
        </div>
        <div className="mt-[3px] flex min-h-0 flex-1 flex-col border-t border-l border-[#6b6b6b] bg-white">
            <ul>
                {NODES.map((n, i) => (
                    <li key={n.text} className="flex h-[22px] items-center whitespace-nowrap">
                        {!n.icon && <TreeTrunk />}
                        <button type="button" aria-label={`展开 ${n.text}`} tabIndex={n.box ? 0 : -1}>
                            <TreeBranch box={n.box} open={n.open} last={n.last} first={i === 0} />
                        </button>
                        {n.icon && <span className="flex w-5 justify-center">{treeIcons[n.icon]}</span>}
                        <span className={n.icon ? (i === 0 ? "ml-1 bg-[#e4e4e4] px-[3px] leading-[21px]" : "ml-[7px]") : "ml-1.5"}>{n.text}</span>
                    </li>
                ))}
            </ul>
            <div className="mt-auto mr-15 mb-3 flex items-end justify-end gap-1">
                <svg width="92" height="80" viewBox="0 0 92 80" fill="#fff" stroke="#8a8a8a" className="drop-shadow-[1px_1px_1px_#999]" aria-hidden="true">
                    <path d="M33 54l-11-1-11 6 3-11Q2 41 2 29 3 4 32 2q28 1 31 24" />
                    <path d="M80 74l-9-5q-34 5-37-21 2-22 28-23 26 1 28 23 0 12-12 18z" stroke="#666" />
                    <path d="M18 20a4 4 0 1 1 6 0M42 20a4 4 0 1 1 6 0M49 41a3.500 3.500 0 1 1 5 0M68 41a3.500 3.500 0 1 1 5 0" fill="none" stroke="#666" strokeWidth="1.500" />
                </svg>
                <span className="font-['Noto_Sans'] text-[54px] leading-[92px] font-light text-white [text-shadow:1px_1px_1px_#444]">Jiaji</span>
            </div>
        </div>
    </aside>
);

const StatusSelect = ({ label, value }: { label: string; value: string }) => (
    <div className="relative flex items-center">
        <select aria-label={label} className="h-[23px] w-[254px] appearance-none border border-[#e6e6e6] bg-white pl-0.5 text-[14px] text-[#7a7a7a]"><option>{value}</option></select>
        <span className="pointer-events-none absolute right-1"><Svg w={10} h={6}><path d="M1 1l4 4 4-4" stroke="#999" /></Svg></span>
    </div>
);

const StatusBar = () => (
    <footer className="flex h-[29px] shrink-0 items-center border-t border-[#8f9494] text-black">
        <p className="w-[39%] pl-0.5">演示.dwg : 导入符号 : 位置 &lt;未共享&gt;</p>
        <IconButton label="工作集" className="mr-1 ml-1 w-7"><Svg><g fill="#8f8f8f" stroke="#eee"><circle cx="10" cy="4" r="3" /><path d="M7 7h6v5H7z" /><path d="M1 9l3-2 3 2v10H1zM8 11h4v8H8zM13 9l3-2 3 2v10h-6z" /></g></Svg></IconButton>
        <StatusSelect label="活动工作集" value="" />
        <button type="button" className="ml-2 flex items-center gap-1.5"><Svg><path d="M7 1h11v6h-5l-2 3-1-3H7z" fill="#ddd" stroke="#888" strokeWidth="1.500" /><path d="M2 19v-6q3-3 7 0v6z" fill="#929292" /></Svg>:0</button>
        <IconButton label="设计选项" className="ml-5 w-[26px]"><Svg><rect x="1" y="1" width="18" height="18" fill="#f2f4f8" stroke="#30384a" strokeWidth="1.500" /><path d="M1 3h18" stroke="#30384a" strokeWidth="3" /><path d="M4 8h3M9 8h8M6 12h3M11 12h6M6 16h3M11 16h6" stroke="#30384a" strokeWidth="2" /></Svg></IconButton>
        <IconButton label="添加到集" className="mr-1 ml-1 w-[26px]"><Svg><path d="M3 1h16v18h-7v-4h3l-5-5-5 4H3z" fill="#929292" /><path d="M1 15h5v-3l5 4-5 4v-3" fill="#aaa" stroke="#eee" /></Svg></IconButton>
        <StatusSelect label="设计选项集" value="主模型" />
        <div className="ml-auto flex items-center pr-[68px]">
            <IconButton label="选择链接" className="w-[30px]"><Svg><rect x="1" y="3" width="8" height="6" rx="3" stroke="#d39b16" strokeWidth="2.500" /><rect x="11" y="3" width="8" height="6" rx="3" stroke="#d39b16" strokeWidth="2.500" /><Cursor x={8} y={5} /></Svg></IconButton>
            <IconButton label="选择基线图元" className="w-[30px]"><Svg><path d="M1 16L13 2M1 16h12M4 11h9" stroke="#2678c4" strokeWidth="1.500" /><path d="M12 1l7 8M19 1l-7 8" stroke="#c31818" strokeWidth="2.500" /><Cursor x={10} y={6} /></Svg></IconButton>
            <IconButton label="选择锁定图元" className="w-[30px]"><Svg><path d="M2 1h11v3H2zM4 4h7v6H4zM1 10h13v4H1z" fill="#f28a35" stroke="#a84e12" /><path d="M7 14v5" stroke="#444" /><Cursor x={11} y={6} /></Svg></IconButton>
            <IconButton label="按面选择" className="w-[30px]"><Svg><path d="M2 4l10-3v14L2 18z" fill={SKY} stroke={BLUE} strokeWidth="1.500" /><Cursor x={11} y={6} /></Svg></IconButton>
            <IconButton label="选择时拖曳" className="w-[30px]"><Svg><path d="M6 1v11M0 6h12M4 3l2-2 2 2M4 10l2 2 2-2M2 4L0 6l2 2M10 4l2 2-2 2" stroke="#222" /><Cursor x={11} y={6} /></Svg></IconButton>
            <IconButton label="后台进程" className="w-[30px]"><Svg><circle cx="10" cy="10" r="6.500" stroke="#9c9c9c" strokeWidth="5" strokeDasharray="4 1" /></Svg></IconButton>
            <button type="button" className="flex items-center gap-px pl-1"><Svg><path d="M1 1h18v3l-7 7v8H8v-8L1 4z" fill="#a9afb8" stroke="#59616d" strokeWidth="1.500" /><path d="M3 2l6 8v8" stroke="#f3f3f3" strokeWidth="1.500" /></Svg>:1</button>
        </div>
    </footer>
);

export default function App() {
    return (
        <div className="relative flex h-screen flex-col overflow-hidden bg-[#d4d4d4] font-['Open_Sans','Noto_Sans_CJK_SC',sans-serif] text-[15px] text-[#2b2b2b]">
            <TitleBar />
            <TabBar />
            <Ribbon />
            <QuickAccess />
            <div className="flex h-[30px] shrink-0 items-center bg-[#e5f0d6] pt-0.5 pl-[11px] text-black">修改 | 演示.dwg</div>
            <div className="flex min-h-0 flex-1 gap-[5px] bg-[#f8f8f8] pb-0.5">
                <PropertiesPanel />
                <ViewCanvas />
                <ProjectBrowser />
            </div>
            <StatusBar />
            <div className="flex h-[9px] shrink-0 bg-[#252525] pl-[322px]"><span className="w-[45px] bg-[#565656]" /></div>
            <Annotations />
        </div>
    );
}
